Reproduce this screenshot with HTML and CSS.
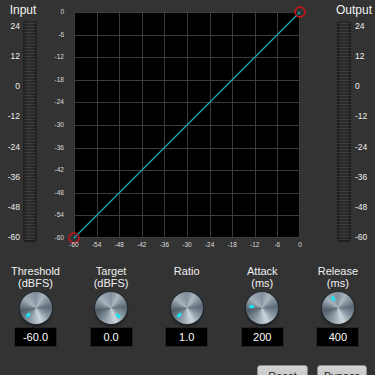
FILE: index.html
```html
<!DOCTYPE html>
<html lang="en">
<head>
  <meta charset="UTF-8">
  <meta name="viewport" content="width=device-width, initial-scale=1.0">
  <title>Compressor</title>
  <link rel="stylesheet" href="styles.css">
</head>
<body>
  <div class="top">
    <!-- Input meter -->
    <div class="channel channel-in">
      <div class="channel-title">Input</div>
      <div class="meter-wrap">
        <div class="scale">
          <span>24</span><span>12</span><span>0</span><span>-12</span>
          <span>-24</span><span>-36</span><span>-48</span><span>-60</span>
        </div>
        <div class="meter"></div>
      </div>
    </div>

    <!-- Transfer curve -->
    <div class="chart">
      <div class="yaxis">
        <span>0</span><span>-6</span><span>-12</span><span>-18</span><span>-24</span><span>-30</span>
        <span>-36</span><span>-42</span><span>-48</span><span>-54</span><span>-60</span>
      </div>
      <div class="plot-col">
        <div class="plot">
          <svg width="226" height="226" viewBox="0 0 226 226">
            <g stroke="#3b3b3b" stroke-width="1" shape-rendering="crispEdges">
              <path d="M0.5 0V226M23.1 0V226M45.7 0V226M68.3 0V226M90.9 0V226M113.5 0V226M136.1 0V226M158.7 0V226M181.3 0V226M203.9 0V226M225.5 0V226"/>
              <path d="M0 0.5H226M0 23.1H226M0 45.7H226M0 68.3H226M0 90.9H226M0 113.5H226M0 136.1H226M0 158.7H226M0 181.3H226M0 203.9H226M0 225.5H226"/>
            </g>
            <line x1="0" y1="226" x2="226" y2="0" stroke="#17a9b4" stroke-width="1.3"/>
            <circle cx="0" cy="226" r="5" fill="none" stroke="#d0121b" stroke-width="1.4"/>
            <circle cx="226" cy="0" r="5" fill="none" stroke="#d0121b" stroke-width="1.4"/>
          </svg>
        </div>
        <div class="xaxis">
          <span>-60</span><span>-54</span><span>-48</span><span>-42</span><span>-36</span><span>-30</span>
          <span>-24</span><span>-18</span><span>-12</span><span>-6</span><span>0</span>
        </div>
      </div>
    </div>

    <!-- Output meter -->
    <div class="channel channel-out">
      <div class="channel-title">Output</div>
      <div class="meter-wrap">
        <div class="meter"></div>
        <div class="scale">
          <span>24</span><span>12</span><span>0</span><span>-12</span>
          <span>-24</span><span>-36</span><span>-48</span><span>-60</span>
        </div>
      </div>
    </div>
  </div>

  <!-- Controls -->
  <div class="knobs">
    <div class="control">
      <div class="control-label">Threshold<br>(dBFS)</div>
      <div class="knob"><div class="mark" style="--a: -135deg"></div></div>
      <div class="value">-60.0</div>
    </div>
    <div class="control">
      <div class="control-label">Target<br>(dBFS)</div>
      <div class="knob"><div class="mark" style="--a: 135deg"></div></div>
      <div class="value">0.0</div>
    </div>
    <div class="control">
      <div class="control-label">Ratio<br>&nbsp;</div>
      <div class="knob"><div class="mark" style="--a: -135deg"></div></div>
      <div class="value">1.0</div>
    </div>
    <div class="control">
      <div class="control-label">Attack<br>(ms)</div>
      <div class="knob"><div class="mark" style="--a: -85deg"></div></div>
      <div class="value">200</div>
    </div>
    <div class="control">
      <div class="control-label">Release<br>(ms)</div>
      <div class="knob"><div class="mark" style="--a: -30deg"></div></div>
      <div class="value">400</div>
    </div>
  </div>

  <div class="actions">
    <button class="btn btn-reset">Reset</button>
    <button class="btn btn-bypass">Bypass</button>
  </div>
</body>
</html>
```

FILE: styles.css
```css
/* Base */
body, html {
  margin: 0;
  padding: 0;
}

body {
  width: 375px;
  height: 375px;
  overflow: hidden;
  background-color: #333333;
  color: #f2f2f2;
  font-family: "Liberation Sans", Arial, sans-serif;
}

/* Top area: meters + chart */
.top {
  display: flex;
  height: 265px;
}

.channel-title {
  margin-top: 3px;
  height: 14px;
  line-height: 14px;
  font-size: 12px;
  text-align: center;
  margin-bottom: 4px;
}

.channel-in {
  width: 40px;
  flex: none;
}

.channel-in .channel-title {
  width: 46px;
}

.channel-out {
  margin-left: 37px;
  flex: none;
}

.channel-out .channel-title {
  margin-left: -1px;
}

.meter-wrap {
  display: flex;
  height: 221px;
}

.scale {
  display: flex;
  flex-direction: column;
  justify-content: space-between;
  font-size: 8.5px;
  line-height: 10px;
  color: #eeeeee;
}

.channel-in .scale {
  width: 20px;
  margin-right: 3px;
  text-align: right;
}

.channel-out .scale {
  margin-left: 4px;
  text-align: left;
}

.meter {
  width: 14px;
  border-radius: 3px;
  background:
    linear-gradient(to right, rgba(0, 0, 0, 0.35), rgba(0, 0, 0, 0) 30%, rgba(0, 0, 0, 0) 70%, rgba(0, 0, 0, 0.35)),
    repeating-linear-gradient(to bottom, #2b2b2b 0, #2b2b2b 2px, #3e3e3e 2px, #3e3e3e 3px);
  border-bottom: 2px solid #1e1e1e;
  box-sizing: border-box;
}

/* Chart */
.chart {
  display: flex;
  flex: none;
}

.yaxis {
  width: 24px;
  height: 248.6px;
  margin-top: 0.7px;
  display: grid;
  grid-template-rows: repeat(11, 22.6px);
  align-items: center;
  text-align: right;
  font-size: 6.5px;
  line-height: 8px;
  color: #dddddd;
}

.plot-col {
  width: 226px;
  margin-left: 10px;
  margin-top: 12px;
}

.plot {
  width: 226px;
  height: 226px;
  background-color: #000000;
}

.plot svg {
  display: block;
  overflow: visible;
}

.xaxis {
  display: grid;
  grid-template-columns: repeat(11, 22.6px);
  width: 248.6px;
  margin-left: -11.3px;
  margin-top: 3px;
  text-align: center;
  font-size: 6.5px;
  line-height: 8px;
  color: #dddddd;
}

/* Knob row */
.knobs {
  display: grid;
  grid-template-columns: repeat(5, 75.6px);
  margin-left: -2.3px;
}

.control {
  display: flex;
  flex-direction: column;
  align-items: center;
}

.control-label {
  font-size: 11px;
  line-height: 12px;
  text-align: center;
  color: #f0f0f0;
}

.knob {
  position: relative;
  width: 32px;
  height: 32px;
  margin-top: 3px;
  border-radius: 50%;
  background:
    radial-gradient(circle at 50% 50%, rgba(255, 255, 255, 0.1) 0, rgba(255, 255, 255, 0) 60%),
    conic-gradient(#7f8e9b 0deg, #a9b5bf 30deg, #5c6a77 85deg, #8a98a5 125deg, #cbd4db 160deg, #95a2ad 200deg, #4f5c68 260deg, #a3afb9 310deg, #7f8e9b 360deg);
  box-shadow: 0 0 0 1px #262b30, 0 2px 3px rgba(0, 0, 0, 0.6);
}

.mark {
  position: absolute;
  inset: 0;
  transform: rotate(var(--a));
}

.mark::after {
  content: "";
  position: absolute;
  left: 14.5px;
  top: 3px;
  width: 3px;
  height: 5px;
  border-radius: 1px;
  background-color: #19e4f2;
}

.value {
  width: 43px;
  height: 20px;
  margin-top: 3px;
  box-sizing: border-box;
  border: 1px solid #262626;
  background-color: #000000;
  font-size: 11px;
  line-height: 18px;
  text-align: center;
  color: #ffffff;
}

/* Buttons */
.actions {
  display: flex;
  justify-content: flex-end;
  gap: 9px;
  margin-top: 18px;
  padding-right: 8px;
}

.btn {
  height: 22px;
  padding: 0;
  border: 1px solid #8a8a8a;
  border-radius: 3px;
  background: linear-gradient(#d4d4d4, #bdbdbd);
  color: #222222;
  font-family: "Liberation Sans", Arial, sans-serif;
  font-size: 11px;
}

.btn-reset {
  width: 51px;
}

.btn-bypass {
  width: 50px;
}
```
